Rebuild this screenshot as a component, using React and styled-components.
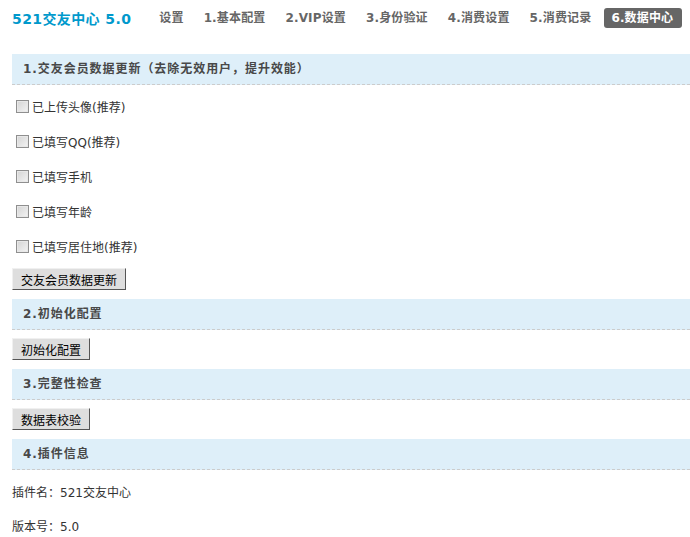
import React from "react";
import styled, { createGlobalStyle } from "styled-components";

const GlobalStyle = createGlobalStyle`
  html, body {
    margin: 0;
    padding: 0;
    background: #fff;
  }
  body {
    font: 12px Tahoma, "DejaVu Sans", "Noto Sans CJK SC", sans-serif;
    color: #333;
  }
`;

const navItems = [
  "设置",
  "1.基本配置",
  "2.VIP设置",
  "3.身份验证",
  "4.消费设置",
  "5.消费记录",
  "6.数据中心",
];

const checks = [
  "已上传头像(推荐)",
  "已填写QQ(推荐)",
  "已填写手机",
  "已填写年龄",
  "已填写居住地(推荐)",
];

const App = () => {
  return (
    <Page>
      <GlobalStyle />
      <TitleBar>
        <Title>521交友中心 5.0</Title>
        <Nav>
          {navItems.map((item, i) => (
            <NavLink key={item} $active={i === navItems.length - 1}>
              {item}
            </NavLink>
          ))}
        </Nav>
      </TitleBar>

      <Partition>1.交友会员数据更新（去除无效用户，提升效能）</Partition>
      <CheckList>
        {checks.map((label) => (
          <CheckRow key={label}>
            <Box type='checkbox' />
            <span>{label}</span>
          </CheckRow>
        ))}
      </CheckList>
      <Button>交友会员数据更新</Button>

      <Partition>2.初始化配置</Partition>
      <Button>初始化配置</Button>

      <Partition>3.完整性检查</Partition>
      <Button>数据表校验</Button>

      <Partition>4.插件信息</Partition>
      <InfoList>
        <InfoRow>插件名：521交友中心</InfoRow>
        <InfoRow>版本号：5.0</InfoRow>
      </InfoList>
    </Page>
  );
};

const Page = styled.div`
  padding: 8px 0 0 12px;
  width: 678px;
`;

const TitleBar = styled.div`
  display: flex;
  align-items: center;
  height: 20px;
  margin-bottom: 26px;
`;

const Title = styled.h3`
  margin: 0 28px 0 0;
  font-size: 14px;
  font-weight: bold;
  letter-spacing: 0.4px;
  color: #0099cc;
  white-space: nowrap;
`;

const Nav = styled.div`
  display: flex;
  align-items: center;
  gap: 20px;
`;

const NavLink = styled.a`
  display: block;
  height: 20px;
  line-height: 20px;
  padding: ${(p) => (p.$active ? "0 9px 0 7px" : "0")};
  margin-left: ${(p) => (p.$active ? "-7px" : "0")};
  border-radius: 3px;
  background: ${(p) => (p.$active ? "#666" : "transparent")};
  color: ${(p) => (p.$active ? "#fff" : "#666")};
  font-weight: bold;
  letter-spacing: 0.15px;
  white-space: nowrap;
  cursor: pointer;
`;

const Partition = styled.div`
  height: 30px;
  line-height: 30px;
  padding-left: 11px;
  background: #deeff9;
  border-bottom: 1px dashed #ccc;
  font-weight: bold;
  letter-spacing: 0.95px;
  color: #484848;
  margin-bottom: 8px;
`;

const CheckList = styled.div`
  display: flex;
  flex-direction: column;
  margin-top: -4px;
  margin-bottom: 4px;
`;

const CheckRow = styled.label`
  display: flex;
  align-items: center;
  height: 35px;
  padding-left: 4px;
  color: #333;
`;

const Box = styled.input`
  appearance: none;
  width: 13px;
  height: 13px;
  margin: 0 3px 0 0;
  border: 1px solid #8f8f8f;
  background: linear-gradient(135deg, #d4d4d4 0%, #f4f4f4 100%);
  box-shadow: inset 0 0 0 1px #e8e8e8;
`;

const Button = styled.button`
  display: block;
  height: 22px;
  padding: 0 8px;
  margin-bottom: 9px;
  font: 12px Tahoma, "DejaVu Sans", "Noto Sans CJK SC", sans-serif;
  color: #000;
  background: #dedede;
  border: 1px solid;
  border-color: #f0f0f0 #555 #555 #f0f0f0;
  cursor: pointer;
`;

const InfoList = styled.div`
  display: flex;
  flex-direction: column;
  margin-top: -2px;
`;

const InfoRow = styled.div`
  height: 34px;
  line-height: 34px;
  color: #333;
`;

export default App;
